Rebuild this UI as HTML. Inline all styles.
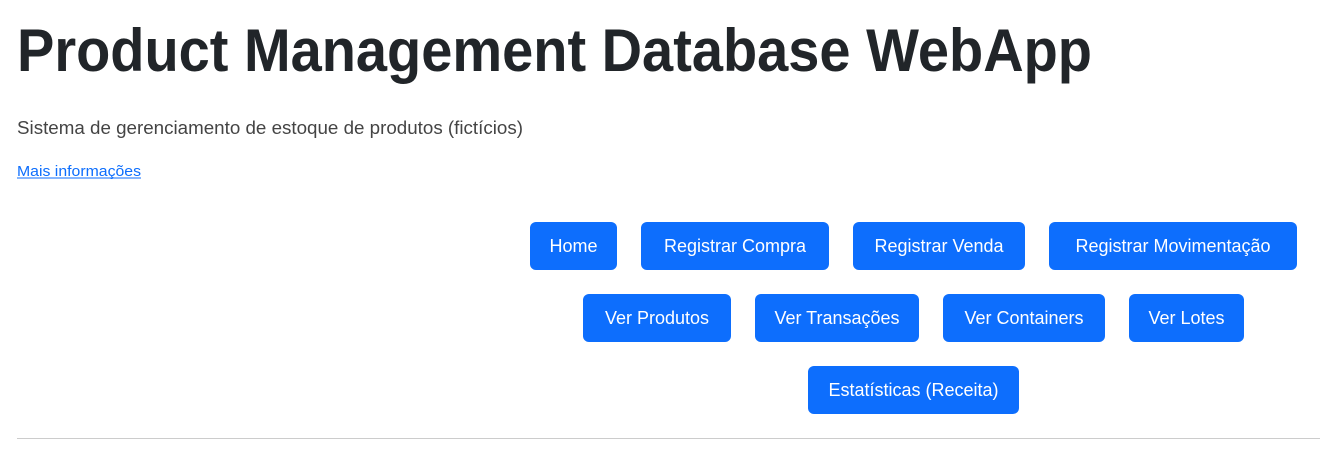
<!DOCTYPE html>
<html><head><meta charset="utf-8"><style>
body{margin:0;width:1320px;height:455px;background:#fff;position:relative;overflow:hidden;font-family:"Liberation Sans",sans-serif}
svg.t{position:absolute;left:0;top:0}
.b{position:absolute;height:48px;background:#0d6efd;color:#fff;border-radius:6px;font-size:18px;display:flex;align-items:center;justify-content:center;white-space:nowrap}
hr{position:absolute;left:17px;width:1303px;top:430px;margin:0;border:0;border-top:1px solid #ccc}
</style></head><body>
<svg class="t" width="1320" height="200">
<text x="17" y="71" font-family="Liberation Sans" font-weight="bold" font-size="60" fill="#212529" textLength="1075" lengthAdjust="spacingAndGlyphs">Product Management Database WebApp</text>
<text x="17" y="134" font-family="Liberation Sans" font-size="18" fill="#444" textLength="506" lengthAdjust="spacingAndGlyphs">Sistema de gerenciamento de estoque de produtos (fictícios)</text>
<text x="17" y="176" font-family="Liberation Sans" font-size="15" fill="#0d6efd" textLength="124" lengthAdjust="spacingAndGlyphs">Mais informações</text>
<line x1="17" y1="178" x2="141" y2="178" stroke="#0d6efd" stroke-width="1"/>
</svg>
<div class="b" style="left:530px;top:222px;width:87px">Home</div>
<div class="b" style="left:641px;top:222px;width:188px">Registrar Compra</div>
<div class="b" style="left:853px;top:222px;width:172px">Registrar Venda</div>
<div class="b" style="left:1049px;top:222px;width:248px">Registrar Movimentação</div>
<div class="b" style="left:583px;top:294px;width:148px">Ver Produtos</div>
<div class="b" style="left:755px;top:294px;width:164px">Ver Transações</div>
<div class="b" style="left:943px;top:294px;width:162px">Ver Containers</div>
<div class="b" style="left:1129px;top:294px;width:115px">Ver Lotes</div>
<div class="b" style="left:808px;top:366px;width:211px">Estatísticas (Receita)</div>
<hr style="top:438px">
</body></html>
